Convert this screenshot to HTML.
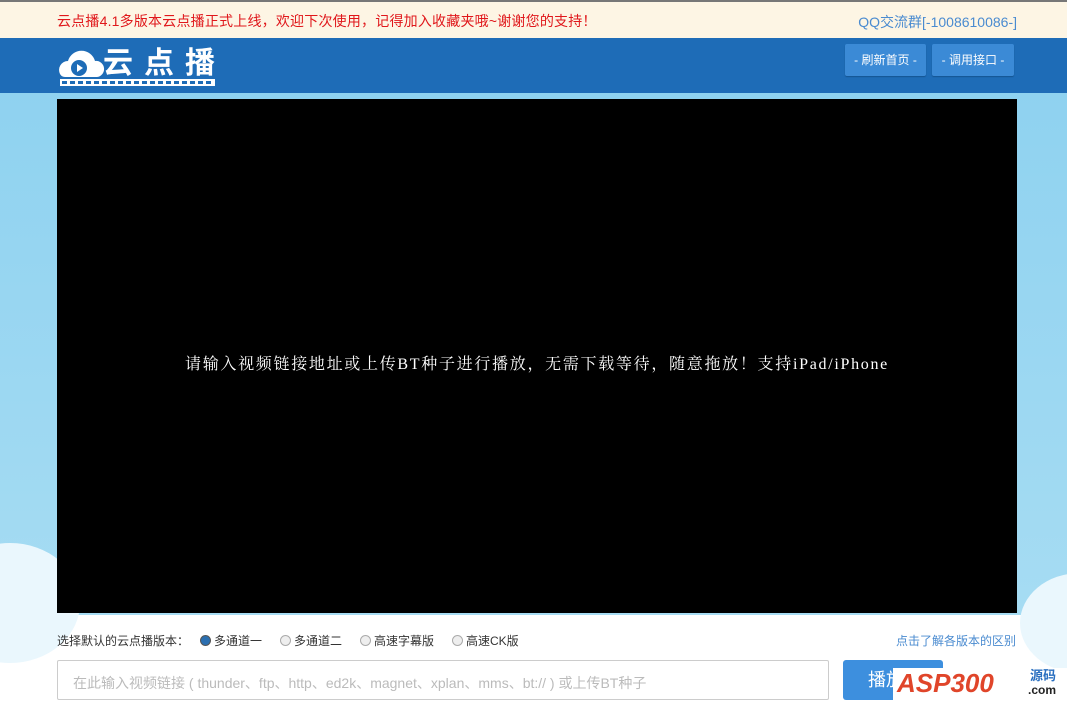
<!DOCTYPE html>
<html><head><meta charset="utf-8"><style>
*{margin:0;padding:0;box-sizing:border-box}
body{width:1067px;height:701px;overflow:hidden;background:#fff;font-family:"Liberation Sans","Microsoft YaHei","Noto Sans CJK SC",sans-serif;position:relative}
.top{position:absolute;left:0;top:0;width:1067px;height:38px;background:#fdf5e4;border-top:2px solid #777}
.top .l{position:absolute;left:57px;top:9px;font-size:14px;color:#e0171b;letter-spacing:0.2px}
.top .r{position:absolute;right:50px;top:10px;font-size:14px;color:#4a8bd0}
.hd{position:absolute;left:0;top:38px;width:1067px;height:55px;background:#1e6cb7}
.btn{position:absolute;top:6px;height:32px;background:#3b8ad6;color:#fff;font-size:12px;line-height:32px;text-align:center;border-radius:2px;box-shadow:0 1px 1px #155592}
.sky{position:absolute;left:0;top:93px;width:1067px;height:522px;background:linear-gradient(#8fd2f0,#a6dcf3)}
.cl{position:absolute;background:#eaf7fd;border-radius:50%}
.vid{position:absolute;left:57px;top:99px;width:960px;height:514px;background:#000;color:#fff;font-family:"Liberation Serif","Noto Serif CJK SC",serif;font-size:16px;letter-spacing:1.7px;text-align:center;line-height:532px}
.opt{position:absolute;top:632px;font-size:12px;color:#333}
.rad{display:inline-block;width:11px;height:11px;border-radius:50%;border:1px solid #aaa;background:#eee;vertical-align:-1px;margin-right:3px}
.inp{position:absolute;left:57px;top:660px;width:772px;height:40px;border:1px solid #ccc;border-radius:2px;font-size:14px;color:#bbb;padding:12px 15px}
.play{position:absolute;left:843px;top:660px;width:100px;height:40px;background:#3d8fde;border-radius:3px;color:#fff;font-size:18px;line-height:40px;padding-left:25px}
</style></head><body>
<div class="top"><div class="l">云点播4.1多版本云点播正式上线，欢迎下次使用，记得加入收藏夹哦~谢谢您的支持！</div><div class="r">QQ交流群[-1008610086-]</div></div>
<div class="hd">
<svg style="position:absolute;left:58px;top:6px" width="160" height="44"><path d="M2 30a9 9 0 0 1 8-13a14 14 0 0 1 27 0a8 8 0 0 1 2 16H7a6 6 0 0 1-5-3z" fill="#fff"/><circle cx="21" cy="24" r="8" fill="#1e6cb7"/><path d="M19 20l6 4-6 4z" fill="#fff"/><text x="45" y="29" font-size="30" font-weight="bold" fill="#fff" font-family="Noto Sans CJK SC,sans-serif" textLength="112">云点播</text><rect x="2" y="35" width="155" height="7" fill="#fff"/><g fill="#1e6cb7"><rect x="4" y="37" width="5" height="3"/><rect x="12" y="37" width="5" height="3"/><rect x="20" y="37" width="5" height="3"/><rect x="28" y="37" width="5" height="3"/><rect x="36" y="37" width="5" height="3"/><rect x="44" y="37" width="5" height="3"/><rect x="52" y="37" width="5" height="3"/><rect x="60" y="37" width="5" height="3"/><rect x="68" y="37" width="5" height="3"/><rect x="76" y="37" width="5" height="3"/><rect x="84" y="37" width="5" height="3"/><rect x="92" y="37" width="5" height="3"/><rect x="100" y="37" width="5" height="3"/><rect x="108" y="37" width="5" height="3"/><rect x="116" y="37" width="5" height="3"/><rect x="124" y="37" width="5" height="3"/><rect x="132" y="37" width="5" height="3"/><rect x="140" y="37" width="5" height="3"/><rect x="148" y="37" width="5" height="3"/></g></svg>
<div class="btn" style="left:845px;width:81px">- 刷新首页 -</div>
<div class="btn" style="left:932px;width:82px">- 调用接口 -</div>
</div>
<div class="sky">
<div class="cl" style="left:-60px;top:450px;width:140px;height:120px"></div>
<div class="cl" style="left:1020px;top:480px;width:120px;height:100px"></div>
</div>
<div class="vid">请输入视频链接地址或上传BT种子进行播放，无需下载等待，随意拖放！支持iPad/iPhone</div>
<div class="opt" style="left:57px">选择默认的云点播版本：</div>
<div class="opt" style="left:200px"><span class="rad" style="background:#2b6fb0;border-color:#555"></span>多通道一</div>
<div class="opt" style="left:280px"><span class="rad"></span>多通道二</div>
<div class="opt" style="left:360px"><span class="rad"></span>高速字幕版</div>
<div class="opt" style="left:452px"><span class="rad"></span>高速CK版</div>
<div class="opt" style="left:896px;color:#4a8bd0">点击了解各版本的区别</div>
<div class="inp">在此输入视频链接 ( thunder、ftp、http、ed2k、magnet、xplan、mms、bt:// ) 或上传BT种子</div>
<div class="play">播放</div>
<div style="position:absolute;left:893px;top:668px;width:174px;height:33px;background:#fff"></div>
<div style="position:absolute;left:897px;top:668px;font:italic bold 26px 'Liberation Sans',sans-serif;color:#e0452a">ASP300</div>
<div style="position:absolute;left:1030px;top:665px;font:bold 13px 'Noto Sans CJK SC',sans-serif;color:#2a6fc0">源码</div>
<div style="position:absolute;left:1028px;top:683px;font:bold 12px 'Liberation Sans',sans-serif;color:#222">.com</div>
</body></html>
